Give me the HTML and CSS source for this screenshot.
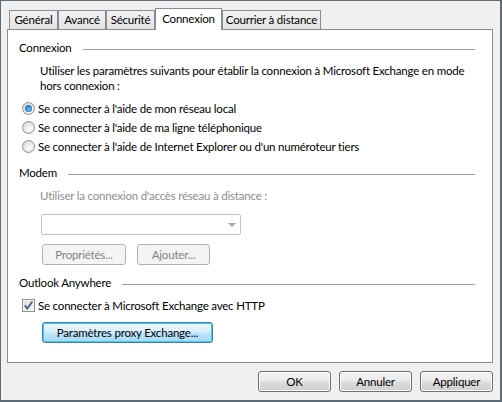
FILE: index.html
```html
<!DOCTYPE html>
<html lang="fr">
<head>
<meta charset="utf-8">
<link rel="stylesheet" href="styles.css">
</head>
<body>
<div class="window">
  <div class="tabs">
    <div class="tab w1">Général</div>
    <div class="tab w2">Avancé</div>
    <div class="tab w3">Sécurité</div>
    <div class="tab active w4">Connexion</div>
    <div class="tab w5">Courrier à distance</div>
  </div>
  <div class="panel">
    <div class="group-head g1"><span>Connexion</span><i></i></div>
    <p class="para">Utiliser les paramètres suivants pour établir la connexion à Microsoft Exchange en mode<br>hors connexion :</p>
    <div class="radios">
      <div class="opt"><span class="radio checked"></span><span>Se connecter à l'aide de mon réseau local</span></div>
      <div class="opt"><span class="radio"></span><span>Se connecter à l'aide de ma ligne téléphonique</span></div>
      <div class="opt"><span class="radio"></span><span>Se connecter à l'aide de Internet Explorer ou d'un numéroteur tiers</span></div>
    </div>
    <div class="group-head g2"><span>Modem</span><i></i></div>
    <p class="para gray">Utiliser la connexion d'accès réseau à distance :</p>
    <div class="combo"><span class="arrow"></span></div>
    <div class="btn-row">
      <div class="btn disabled b-prop">Propriétés...</div>
      <div class="btn disabled b-add">Ajouter...</div>
    </div>
    <div class="group-head g3"><span>Outlook Anywhere</span><i></i></div>
    <div class="opt check-row">
      <span class="checkbox"><svg width="9" height="9" viewBox="0 0 9 9"><path d="M0.8 4.4 L3.3 7.6 L8.3 0.6" fill="none" stroke="#4a5f8e" stroke-width="1.8"/></svg></span>
      <span>Se connecter à Microsoft Exchange avec HTTP</span>
    </div>
    <div class="btn default b-proxy">Paramètres proxy Exchange...</div>
  </div>
  <div class="footer">
    <div class="btn fb">OK</div>
    <div class="btn fb">Annuler</div>
    <div class="btn fb">Appliquer</div>
  </div>
</div>
</body>
</html>
```
FILE: styles.css
```css
* { box-sizing: border-box; }
html, body { margin: 0; padding: 0; }
body {
  width: 502px;
  height: 402px;
  overflow: hidden;
  font-family: "Segoe UI", Lato, "Noto Sans", sans-serif;
  font-size: 11.5px;
  letter-spacing: -0.2px;
  line-height: 15px;
  color: #000;
}
.window {
  width: 502px;
  height: 402px;
  background: #f0f0f0;
  border-style: solid;
  border-color: #5f6b78;
  border-width: 1px 2px 2px 1px;
  padding: 0 7px 0 6px;
}
.tabs {
  display: flex;
  align-items: flex-end;
  height: 28px;
  padding-left: 2px;
  position: relative;
  z-index: 2;
}
.tab {
  height: 19px;
  border: 1px solid #898c95;
  border-bottom: none;
  background: linear-gradient(#f2f2f2, #e3e3e3);
  display: flex;
  align-items: center;
  justify-content: center;
  white-space: nowrap;
  padding-bottom: 1px;
}
.tab.active {
  height: 22px;
  margin-bottom: -1px;
  background: #fff;
  padding-bottom: 3px;
}
.w1 { width: 49px; }
.w2 { width: 48px; }
.w3 { width: 49px; }
.w4 { width: 67px; }
.w5 { width: 99px; }
.panel {
  height: 334px;
  background: #fff;
  border: 1px solid #898c95;
  padding: 10px 17px 0 11px;
  position: relative;
  z-index: 1;
}
.group-head {
  display: flex;
  align-items: center;
  gap: 11px;
}
.group-head i {
  flex: 1;
  height: 1px;
  background: #a0a0a0;
  margin-top: 3px;
}
.para {
  margin: 8px 0 0 21px;
  white-space: nowrap;
}
.para.gray { color: #8d8d8d; }
.g2 { margin-top: 10px; }
.g3 { margin-top: 10px; }
.radios {
  margin-top: 6px;
  display: flex;
  flex-direction: column;
  gap: 1px;
}
.opt {
  display: flex;
  align-items: center;
  height: 18px;
  gap: 3px;
  padding-left: 3px;
  white-space: nowrap;
}
.radio {
  width: 13px;
  height: 13px;
  border-radius: 50%;
  border: 1px solid #8e8f8f;
  background: radial-gradient(circle at 60% 65%, #fdfdfd 0%, #e6e6e6 55%, #cfcfcf 100%);
  position: relative;
  flex: none;
}
.radio.checked::after {
  content: "";
  position: absolute;
  left: 2px;
  top: 2px;
  width: 7px;
  height: 7px;
  border-radius: 50%;
  background: radial-gradient(circle at 55% 60%, #6fc4f7 0%, #2a7fcb 55%, #1a4f8a 100%);
}
.combo {
  margin: 11px 0 0 22px;
  width: 200px;
  height: 21px;
  border: 1px solid #c4c4c4;
  border-radius: 2px;
  background: #fff;
  position: relative;
}
.combo .arrow {
  position: absolute;
  right: 4px;
  top: 8px;
  width: 0;
  height: 0;
  border-left: 4px solid transparent;
  border-right: 4px solid transparent;
  border-top: 4px solid #a6a6a6;
}
.btn-row {
  display: flex;
  gap: 11px;
  margin: 9px 0 0 23px;
}
.btn {
  height: 21px;
  border: 1px solid #707070;
  border-radius: 3px;
  background: linear-gradient(#f2f2f2 0%, #ebebeb 48%, #dddddd 52%, #cfcfcf 100%);
  box-shadow: inset 0 0 0 1px #fbfbfb;
  display: flex;
  align-items: center;
  justify-content: center;
  white-space: nowrap;
  padding-bottom: 1px;
}
.btn.disabled {
  border-color: #adb2b5;
  background: #f4f4f4;
  box-shadow: none;
  color: #838383;
}
.b-prop { width: 84px; }
.b-add { width: 73px; }
.check-row {
  margin-top: 7px;
  height: 16px;
}
.checkbox {
  width: 13px;
  height: 13px;
  border: 1px solid #8e8f8f;
  background: linear-gradient(135deg, #dcdcdc, #fbfbfb);
  box-shadow: inset 0 0 0 1px #f4f4f4;
  display: flex;
  align-items: center;
  justify-content: center;
  flex: none;
}
.b-proxy {
  margin: 9px 0 0 23px;
  width: 171px;
}
.btn.default {
  border-color: #3c7fb1;
  background: linear-gradient(#eaf6fd 0%, #d9f0fc 48%, #bee6fd 52%, #a7d9f5 100%);
  box-shadow: inset 0 0 0 1px #48c8f0;
}
.footer {
  display: flex;
  justify-content: flex-end;
  gap: 8px;
  margin-top: 8px;
}
.fb { width: 73px; }
```
